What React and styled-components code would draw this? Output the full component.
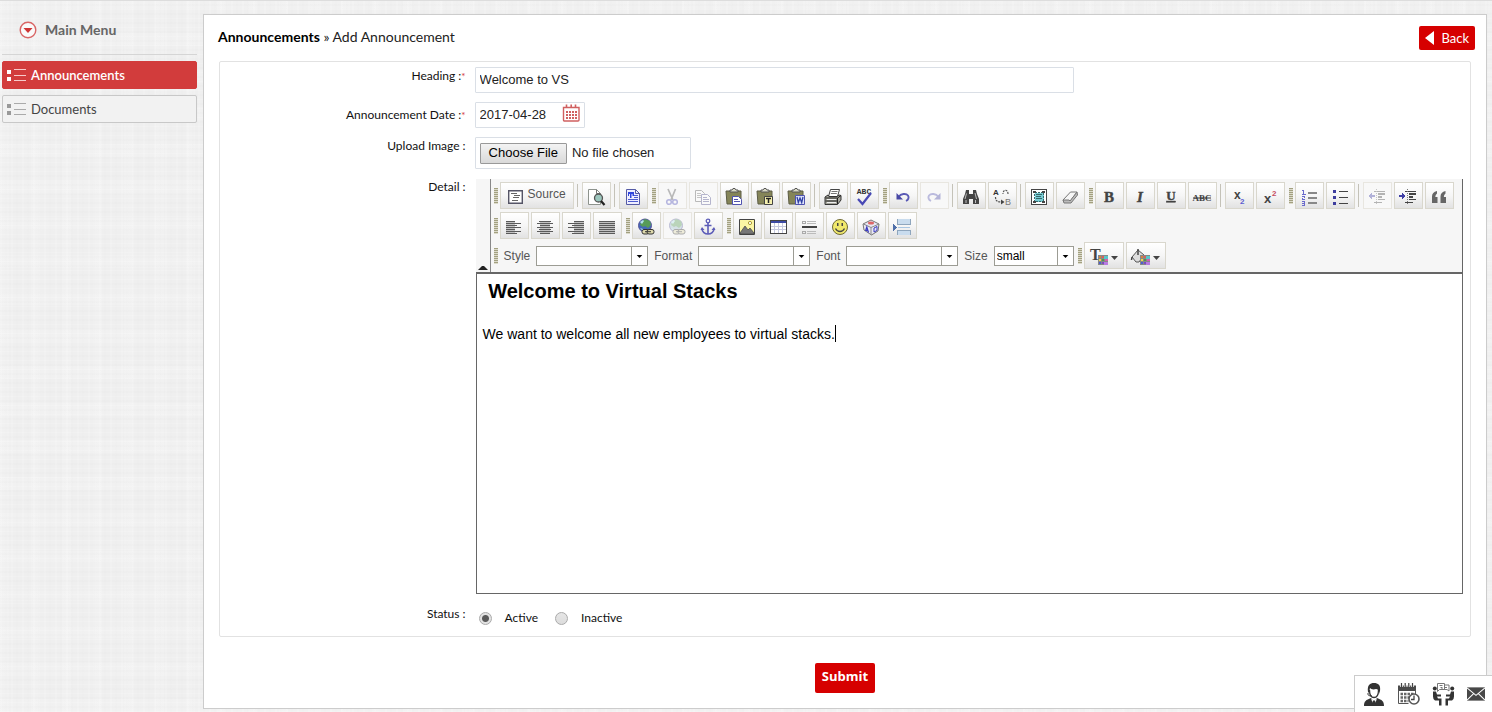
import React from "react";
import styled, { createGlobalStyle, css } from "styled-components";

const sans = '"Liberation Sans", Arial, sans-serif';
const lato = 'Lato, "Open Sans", sans-serif';

const GlobalStyle = createGlobalStyle`
  *, *::before, *::after { box-sizing: border-box; }
  body {
    margin: 0;
    font: 13px/18px ${lato};
    color: #222;
    background-color: #efefef;
    background-image:
      repeating-linear-gradient(90deg, rgba(255,255,255,.14) 0 2px, transparent 2px 5px, rgba(0,0,0,.005) 5px 7px, transparent 7px 11px),
      repeating-linear-gradient(0deg, rgba(255,255,255,.14) 0 1px, transparent 1px 4px, rgba(0,0,0,.006) 4px 6px, transparent 6px 9px),
      repeating-linear-gradient(90deg, rgba(255,255,255,.12) 0 9px, transparent 9px 31px),
      repeating-linear-gradient(0deg, rgba(255,255,255,.12) 0 13px, transparent 13px 37px);
  }
  button, input, select { font: inherit; color: inherit; margin: 0; }
  button { cursor: pointer; }
  svg { display: block; flex: none; }
`;

const Page = styled.div`
  display: flex;
  align-items: flex-start;
  border-top: 1px solid #ddd;
`;

const Sidebar = styled.nav`
  flex: none;
  width: 203px;
  padding: 12px 6px 0 2px;
`;

const MenuHeading = styled.h2`
  display: flex;
  align-items: center;
  gap: 8px;
  height: 42px;
  margin: 0 0 6px;
  padding: 0 0 8px 17px;
  border-bottom: 1px solid #d5d5d5;
  font-size: 14px;
  font-weight: 700;
  color: #666;
`;

const MenuLink = styled.a`
  display: flex;
  align-items: center;
  gap: 4px;
  height: 28px;
  margin-bottom: 6px;
  padding: 0 4px;
  border: 1px solid ${(p) => (p.$active ? "#d23c3c" : "#c8c8c8")};
  border-radius: 2px;
  background: ${(p) => (p.$active ? "#d23c3c" : "#f2f2f2")};
  color: ${(p) => (p.$active ? "#fff" : "#444")};
  font-size: 13px;
  font-weight: ${(p) => (p.$active ? 600 : 400)};
  text-decoration: none;
`;

const Panel = styled.main`
  flex: 1;
  min-width: 0;
  margin: 13px 5px 3px 0;
  padding: 11px 15px 15px;
  border: 1px solid #ccc;
  background: #fff;
`;

const PanelHeader = styled.header`
  display: flex;
  align-items: center;
  justify-content: space-between;
  height: 24px;
  margin: 0 -4px 11px -1px;
`;

const Crumb = styled.h1`
  margin: 0;
  padding-bottom: 2px;
  font-size: 14px;
  font-weight: 400;
  color: #222;
  b { color: #000; }
`;

const RedButton = styled.button`
  display: inline-flex;
  align-items: center;
  justify-content: center;
  gap: 7px;
  height: ${(p) => (p.$large ? 30 : 24)}px;
  padding: ${(p) => (p.$large ? "0 7px 4px" : "0 6px")};
  border: 0;
  border-radius: 2px;
  background: #d60000;
  color: #fff;
  font-family: ${(p) => (p.$large ? '"Open Sans", sans-serif' : lato)};
  font-size: 13px;
  font-weight: ${(p) => (p.$large ? 700 : 400)};
`;

const Fields = styled.div`
  display: grid;
  grid-template-columns: 20% minmax(0, 1fr);
  gap: 9px 6px;
  padding: 5px 7px 5px 0;
  border: 1px solid #e2e2e2;
  border-radius: 2px;
`;

const FieldLabel = styled.label`
  padding-top: ${(p) => p.$top || 0}px;
  padding-right: 3px;
  text-align: right;
  font-size: 12px;
  color: #111;
`;

const Required = styled.span`
  color: #d23c3c;
  font-size: 10px;
`;

const inputFrame = css`
  border: 1px solid #dadfe6;
  border-radius: 1px;
  background: #fff;
`;

const TextInput = styled.input`
  ${inputFrame}
  display: block;
  width: 100%;
  max-width: 599px;
  height: 26px;
  padding: 0 4px 1px;
  font-family: ${sans};
  font-size: 13px;
`;

const DateBox = styled.div`
  ${inputFrame}
  display: flex;
  width: 110px;
  height: 26px;
  padding-right: 4px;
  ${TextInput} { border: 0; height: 24px; flex: 1; min-width: 0; }
`;

const IconButton = styled.button`
  padding: 1px 0 0;
  border: 0;
  background: none;
  align-self: flex-start;
`;

const FileInput = styled.input`
  ${inputFrame}
  display: block;
  width: 216px;
  height: 32px;
  padding: 4px;
  font: 13px/21px ${sans};
  &::file-selector-button {
    height: 21px;
    margin: 0 5px 0 0;
    padding: 0 8px;
    border: 1px solid #999;
    border-radius: 1px;
    background: linear-gradient(#f3f3f3, #d9d9d9);
    font: 13px/18px ${sans};
    color: #000;
  }
`;

const Editor = styled.section`
  margin: 1px 0 0 1px;
  color: #000;
  font-family: ${sans};
`;

const ToolbarFrame = styled.div`
  display: flex;
  border-right: 1px solid #666;
  background: #f6f6f6;
`;

const Collapser = styled.button`
  display: flex;
  align-items: flex-end;
  justify-content: center;
  width: 15px;
  padding: 0 0 2px;
  border: 0;
  border-right: 1px solid #888;
  background: transparent;
`;

const ToolRows = styled.div`
  flex: 1;
  min-width: 0;
  display: flex;
  flex-direction: column;
  gap: 3px;
  padding: 3px 1px;
`;

const ToolRow = styled.div`
  display: flex;
  flex-wrap: wrap;
  align-items: center;
  gap: 2px;
`;

const Tool = styled.button`
  display: flex;
  align-items: center;
  justify-content: center;
  gap: 5px;
  flex: none;
  width: ${(p) => p.$w || 29}px;
  height: 27px;
  padding: 2px 0 0;
  border: 1px solid #d9d7cd;
  background: linear-gradient(#fff, #f6f6f6 50%, #e2e2e2);
  font-size: 12px;
  line-height: 14px;
  color: #555;
  ${(p) => p.$word && "align-items: flex-end; padding: 0 0 4px;"}
  &:disabled {
    border-color: #e8e6e0;
    background: #f8f8f8;
    svg { opacity: 0.38; }
  }
`;

const ToolWord = styled.span`
  padding-bottom: 3px;
`;

const Separator = styled.span`
  width: 1px;
  height: 23px;
  margin: 0 2px 0 1px;
  background: #c4c2b8;
`;

const Grip = styled.span`
  width: 4px;
  height: 16px;
  margin-left: 2px;
  background: repeating-linear-gradient(#a2a080 0 1px, #dcdacb 1px 2px);
`;

const ComboLabel = styled.label`
  display: flex;
  align-items: center;
  gap: 6px;
  padding-left: 4px;
  font-size: 12px;
  color: #555;
`;

const Combo = styled.span`
  display: grid;
  width: ${(p) => p.$w}px;
  height: 20px;
  border: 1px solid #9c9c94;
  background: #fff;
  > * { grid-area: 1 / 1; }
  > svg {
    justify-self: end;
    width: 16px;
    height: 18px;
    border-left: 1px solid #9c9c94;
    pointer-events: none;
  }
`;

const ComboSelect = styled.select`
  appearance: none;
  width: 100%;
  height: 18px;
  padding: 0 18px 0 2px;
  border: 0;
  background: transparent;
  font: 12px/18px ${sans};
  color: #000;
`;

const EditArea = styled.div`
  min-height: 322px;
  padding: 5px 6px;
  border: 1px solid #666;
  border-top: 2px solid #666;
  outline: 0;
  font-size: 14px;
  h2 { margin: 0; font-size: 20px; line-height: 24px; white-space: pre; }
  p { margin: 22px 0 0; line-height: 18px; }
`;

const Caret = styled.i`
  display: inline-block;
  width: 1px;
  height: 17px;
  background: #000;
  vertical-align: text-bottom;
`;

const RadioGroup = styled.div`
  display: flex;
  align-items: center;
  gap: 17px;
  height: 28px;
  padding: 2px 0 0 4px;
`;

const RadioLabel = styled.label`
  display: flex;
  align-items: center;
  gap: 13px;
  font-size: 12px;
  color: #111;
`;

const Radio = styled.input`
  appearance: none;
  width: 13px;
  height: 13px;
  border: 1px solid #aaa;
  border-radius: 50%;
  background: linear-gradient(#e6e6e6, #dcdcdc);
  &:checked { background: radial-gradient(circle, #5a5a5a 0 3px, #e2e2e2 4px); }
`;

const SubmitRow = styled.div`
  display: flex;
  justify-content: center;
  margin-top: 26px;
`;

const Dock = styled.aside`
  position: fixed;
  right: 0;
  bottom: 0;
  display: flex;
  align-items: center;
  gap: 12px;
  height: 37px;
  padding: 0 7px 0 8px;
  border: solid #ccc;
  border-width: 1px 0 0 1px;
  background: #fff;
  ${IconButton} { padding: 0; align-self: center; }
`;

/* ---------- icons ---------- */

const Svg = ({ s = 18, w, h, crisp, children, vb }) => (
  <svg width={w || s} height={h || s} viewBox={vb || "0 0 18 18"} fill="none" aria-hidden="true"
    overflow="visible" shapeRendering={crisp ? "crispEdges" : undefined}>
    {children}
  </svg>
);

const Down = () => (
  <svg viewBox="0 0 16 18" fill="#000" aria-hidden="true"><path d="M5 8h6l-3 3z" /></svg>
);

const ListIcon = ({ active }) => (
  <Svg w={20} h={14} vb="0 0 20 14" crisp>
    <path d="M0 2h4v4H0zM0 9h4v4H0z" fill={active ? "#fff" : "#999"} />
    <path d="M7 1.5h12M7 7.5h12M7 12.5h12" stroke={active ? "#f7caca" : "#aaa"} />
  </Svg>
);

const CalendarIcon = () => (
  <Svg w={18} h={18}>
    <path d="M1.500 3.500h15.500v12.500a1 1 0 0 1-1 1h-13.500a1 1 0 0 1-1-1z" stroke="#d06060" strokeWidth="1.400" />
    <path d="M4.500 0.500v3M9.200 0.500v3M13.500 0.500v3" stroke="#d06060" strokeWidth="1.600" />
    <path d="M4 8h11M4 11h11M4 14h11" stroke="#d06060" strokeWidth="2" strokeDasharray="2 1" />
  </Svg>
);

const Letter = ({ children, ...p }) => (
  <Svg><text x="9" y="14" textAnchor="middle" fontFamily="Liberation Serif, serif" fontSize="15" fontWeight="700" fill="#444" stroke="#444" strokeWidth=".4" {...p}>{children}</text></Svg>
);

const Lines = ({ rows, base }) => (
  <Svg crisp>
    <rect x={base[0]} y="3" width={base[1]} height="13" fill="#c2c2c2" />
    {rows.map(([x, w], i) => <rect key={i} x={x} y={3 + i * 2} width={w} height="1" fill="#5a5a5a" />)}
  </Svg>
);

const Clipboard = ({ children }) => (
  <Svg>
    <path d="M1 3h15v13h-14z" fill="#858558" stroke="#5c5c45" />
    <path d="M5 4V2h2l1-1.500h2L11 2h2v2z" fill="#d9d9c5" stroke="#555" />
    {children}
  </Svg>
);

const Globe = ({ dull }) => (
  <Svg>
    <circle cx="8" cy="7.500" r="6.500" fill={dull ? "#9dbdc9" : "#4468b8"} stroke="#555599" />
    <path d="M4 4l4-3 5 2 1 4-3 3-3-2-2 1-3-2z" fill="#579b58" />
    <path d="M3 4l3-2 1 1-2 3zM3 10l3 1v2z" fill="#b6e3ed" />
    <rect x="5" y="11.500" width="7" height="4.500" rx="2" fill="#ded9ac" stroke="#333" />
    <rect x="10" y="11.500" width="7" height="4.500" rx="2" fill="#ded9ac" stroke="#333" />
    <path d="M8 13.700h6" stroke="#333" />
  </Svg>
);

const Undo = ({ flip }) => (
  <Svg>
    <g transform={flip ? "translate(18 0) scale(-1 1)" : undefined}>
      <path d="M4.500 9C7 5.500 12 5 14 7.500c1.400 2.200.2 4.500-2 5.500" stroke="#5a5ab5" strokeWidth="1.900" />
      <path d="M2.500 5v6.500h6.500z" fill="#4848a5" />
    </g>
  </Svg>
);

const Palette = ({ x = 8, y = 8 }) => (
  <g shapeRendering="crispEdges" transform={`translate(${x} ${y})`}>
    <path d="M0 0h10v10H0z" fill="#888" />
    <path d="M1 1h2v2H1z" fill="#d87f3b" /><path d="M4 1h2v2H4z" fill="#dd5a5a" /><path d="M6 1h4v3H6z" fill="#58c6c9" />
    <path d="M1 4h2v2H1z" fill="#f0db4a" /><path d="M4 4h2v2H4z" fill="#4c9b4c" /><path d="M7 4h3v2H7z" fill="#d65caf" />
    <path d="M1 7h2v2H1z" fill="#4d5ed3" /><path d="M4 7h2v2H4z" fill="#7b4cc0" /><path d="M6 7h4v3H6z" fill="#b87be0" />
  </g>
);

const Indent = ({ out }) => (
  <Svg crisp>
    <path d="M6 3h11v1H6zM10 5h7v2h-7zM10 8h4v2h-4zM10 11h7v1h-7zM6 14h8v1H6z" fill="#444" />
    <path d="M8 1v15" stroke="#777" strokeDasharray="1 1" />
    <path d={out ? "M0 8l4-3v2h3v2H4v2z" : "M7 8L3 5v2H0v2h3v2z"} fill="#3f3fa5" />
  </Svg>
);

const icons = {
  Source: <Svg w={15} h={14} vb="0 0 15 14"><path d="M.7.700h13.600v12.600H.7z" stroke="#556" strokeWidth="1.400" fill="#fff" /><path d="M3 3.500h6M6 5.500h6M5 7.500h6M4 10.500h6" stroke="#666" /></Svg>,
  Preview: <Svg><path d="M1.500 1.500h8l4 4v11h-12z" fill="#fff" stroke="#8d938d" /><path d="M9.500 1.500v4h4" stroke="#777" /><circle cx="11.500" cy="10" r="4" fill="#9cc6bd" stroke="#555" strokeWidth="1.300" /><path d="M14 13l3.500 4" stroke="#222" strokeWidth="2.200" /></Svg>,
  Templates: <Svg><path d="M2.500 1.500h9l4 4v11h-13z" fill="#eef" stroke="#555ba5" /><path d="M11.500 1.500v4h4" stroke="#555ba5" /><path d="M4 4h6v4H8.500V6h-1v4H6V6H5v2H4z" fill="#2f45dc" /><path d="M10 7.500h4M10 9.500h4M4 11.500h10M4 13.500h10" stroke="#4c5bd0" strokeWidth="1.200" /></Svg>,
  Cut: <Svg><path d="M5 1l5 11M12.500 1L8 12" stroke="#555" strokeWidth="1.700" /><circle cx="6" cy="14" r="2.300" stroke="#4a4ab8" strokeWidth="1.500" /><circle cx="12" cy="14" r="2.300" stroke="#4a4ab8" strokeWidth="1.500" /></Svg>,
  Copy: <Svg><path d="M1.500 2.500h6l3 3v8h-9z" fill="#fff" stroke="#555" /><path d="M3 5.500h4M3 7.500h4M3 9.500h4" stroke="#777" /><path d="M7.500 6.500h6l3 3v7h-9z" fill="#fff" stroke="#4a4a88" /><path d="M9 9.500h4M9 11.500h6M9 13.500h6" stroke="#4a4a88" /></Svg>,
  Paste: <Clipboard><path d="M7.500 8.500h6l3 3v5h-9z" fill="#fff" stroke="#5053b0" /><path d="M9 11.500h4M9 13.500h6" stroke="#5053b0" /></Clipboard>,
  "Paste as plain text": <Clipboard><path d="M8.500 8.500h8v8h-8z" fill="#f4f0ae" stroke="#444" /><path d="M10 10.500h5M12.500 10v5" stroke="#222" strokeWidth="1.500" /></Clipboard>,
  "Paste from Word": <Clipboard><path d="M8.500 7.500h9v9h-9z" fill="#dce2fa" stroke="#5053b0" /><path d="M10 9l1.300 5.500L13 10l1.700 4.500L16 9" stroke="#3040a5" strokeWidth="1.300" /></Clipboard>,
  Print: <Svg><path d="M4.500 8.500l2-7h9l-2 7z" fill="#fff" stroke="#444" /><path d="M7.500 3.500h6M6.800 5.500h6" stroke="#777" /><path d="M1 9l3-2 1 1.500h8L15 7l2 .5V12l-3.500 4.500H1z" fill="#a5a59b" stroke="#333" /><path d="M1.500 10h12M1.500 13h12M13.500 10v6M13.500 10L17 7.500" stroke="#222" /><path d="M3 11.500h9M3 14.500h9" stroke="#eee" /></Svg>,
  Spell: <Svg><text x="9" y="6" textAnchor="middle" fontFamily="Liberation Mono, monospace" fontWeight="700" fontSize="8" fill="#333">ABC</text><path d="M3 11l4.500 5L16 5" stroke="#4848b5" strokeWidth="2.200" /></Svg>,
  Undo: <Undo />,
  Redo: <Undo flip />,
  Find: <Svg><path d="M4 2h3v4h4V2h3l1 4 2 5v5h-6v-5H7v5H1v-5l2-5z" fill="#444" /><path d="M4.500 5.500L3 11M13 5l1.500 6M4 12v3M13.500 12v3" stroke="#bbb" /></Svg>,
  Replace: <Svg><text x="0" y="7" fontFamily="Liberation Sans" fontWeight="700" fontSize="8" fill="#333">A</text><text x="12" y="17" fontFamily="Liberation Sans" fontSize="9" fill="#777">B</text><path d="M15 6c0-5-5-5-5 0M2.500 9c0 4 2 5 6 5" stroke="#555" strokeDasharray="2 1" strokeWidth="1.200" /><path d="M8 11.500l3.500 2.500L8 16.500z" fill="#444" /></Svg>,
  "Select all": <Svg crisp><path d="M1.500 1.500h15v15h-15z" fill="#fff" stroke="#444" /><path d="M4.500 4.500h9v9h-9z" fill="#76cbd2" stroke="#37676b" strokeDasharray="2 1" /><path d="M6 6.500h6M6 8.500h5M6 10.500h6" stroke="#37676b" /><path d="M3 3h3v2H3zM12 3h3v2h-3zM3 13h3v2H3zM12 13h3v2h-3z" fill="#444" /></Svg>,
  Eraser: <Svg><path d="M2 12L9.500 4h6.500l-7 9.500H3z" fill="#f6f6f6" stroke="#777" /><path d="M9 13L16 4l.5 3L10 15H3l-1-3h6z" fill="#bbb" stroke="#777" /></Svg>,
  Bold: <Letter>B</Letter>,
  Italic: <Letter fontStyle="italic">I</Letter>,
  Underline: <Letter fontSize="13" y="12" textDecoration="underline">U</Letter>,
  Strike: <Svg w={20} vb="0 0 20 18"><text x="10" y="13" textAnchor="middle" fontFamily="Liberation Serif" fontSize="9" fontWeight="700" fill="#444">ABC</text><path d="M1 10h18" stroke="#333" /></Svg>,
  Subscript: <Svg><text x="4" y="11" fontFamily="Liberation Sans" fontWeight="700" fontSize="12" fill="#444">x</text><text x="10" y="16" fontFamily="Liberation Sans" fontWeight="700" fontSize="8" fill="#5c5cd0">2</text></Svg>,
  Superscript: <Svg><text x="3" y="15" fontFamily="Liberation Sans" fontWeight="700" fontSize="13" fill="#444">x</text><text x="11" y="8" fontFamily="Liberation Sans" fontWeight="700" fontSize="8" fill="#c54c60">2</text></Svg>,
  "Numbered list": <Svg crisp><path d="M8 4.500h9M8 9.500h9M8 14.500h9" stroke="#888" strokeWidth="2" /><path d="M2 2.500h2M3.500 2v5M2 6.500h4M2 8.500h3M4.500 8v2M2 11.500h3M2.500 10v2M2 13.500h3M4.500 13v5M2 15.500h3M2 17.500h3" stroke="#6a6acc" /></Svg>,
  "Bulleted list": <Svg crisp><path d="M2 2h3v3H2zM2 8h3v3H2zM2 14h3v3H2z" fill="#3d3d9e" /><path d="M8 3.500h9M8 9.500h9M8 15.500h9" stroke="#444" /></Svg>,
  Outdent: <Indent out />,
  Indent: <Indent />,
  Quote: <Svg><path d="M2 15V8.500Q2 4 7 3v2.500Q5.300 6.500 5.300 9H7.500v6zM10.500 15V8.500Q10.500 4 15.500 3v2.500Q13.800 6.500 13.800 9H16v6z" fill="#666" /></Svg>,
  "Align left": <Lines base={[1, 9]} rows={[[1, 9], [1, 15], [1, 11], [1, 15], [1, 9], [1, 15], [1, 11]]} />,
  "Align center": <Lines base={[4, 10]} rows={[[3, 12], [1, 16], [4, 10], [1, 16], [3, 12], [1, 16], [4, 10]]} />,
  "Align right": <Lines base={[7, 10]} rows={[[7, 10], [1, 16], [5, 12], [1, 16], [7, 10], [1, 16], [5, 12]]} />,
  Justify: <Lines base={[1, 16]} rows={[[1, 16], [1, 16], [1, 16], [1, 16], [1, 16], [1, 16], [1, 16]]} />,
  Link: <Globe />,
  Unlink: <Globe dull />,
  Anchor: <Svg><circle cx="9" cy="3" r="1.800" stroke="#5c5cb8" strokeWidth="1.300" /><path d="M9 5v11M5.500 7.500h7" stroke="#5c5cb8" strokeWidth="1.600" /><path d="M3 10.500c0 3.500 3 5.500 6 5.500s6-2 6-5.500" stroke="#5c5cb8" strokeWidth="1.600" /><path d="M1.500 12L3 9l2.500 3zM12.500 12L15 9l1.500 3z" fill="#5c5cb8" /></Svg>,
  Image: <Svg><path d="M1.500 1.500h15v15h-15z" fill="#fbf5a4" stroke="#444" /><circle cx="12" cy="5" r="1.600" fill="#fff" stroke="#a99a3a" /><path d="M2 15l5-7 3 4 2-2 4 5v1H2z" fill="#777" stroke="#444" strokeWidth=".7" /></Svg>,
  Table: <Svg crisp><path d="M1 2h17v14H1z" fill="#444" /><path d="M2 3h15v2H2z" fill="#3d4ba5" /><path d="M2 5h15v10H2z" fill="#fff" /><path d="M2 8.500h15M2 11.500h15M5.500 5v10M9.500 5v10M13.500 5v10" stroke="#c6c9df" /></Svg>,
  Rule: <Svg crisp><path d="M7 3.500h9M7 5.500h9M7 13.500h9M7 15.500h9" stroke="#bbb" /><path d="M2 6V3h3v3M2 5h3M2 16v-3h3v3M2 15h3" stroke="#aaa" /><path d="M2 8h15v2H2z" fill="#444" /></Svg>,
  Smiley: <Svg><circle cx="9" cy="9" r="7.500" fill="#f0e86c" stroke="#6f6a35" /><path d="M6 5h1.500v3H6zM10.500 5H12v3h-1.500z" fill="#444" /><path d="M4.500 10.500c2 4 7 4 9 0" stroke="#444" strokeWidth="1.300" /></Svg>,
  "Special character": <Svg><path d="M1 6l8-4 8 4-1 7-6.500 4L2 12z" fill="#e8e8f4" stroke="#777" /><path d="M1.500 6L9 9.500 17 6M9 9.500V17" stroke="#888" /><ellipse cx="9" cy="5" rx="3" ry="1.500" fill="#d66" /><path d="M3.500 13l1.300-4 1.700 5.500M4 12l2 1" stroke="#3b3bc0" strokeWidth="1.200" /><path d="M12 14v-4l3-1.500v4z" stroke="#3b3bc0" /></Svg>,
  "Page break": <Svg crisp><path d="M4 1h13v5H4z" fill="#c9dcee" /><path d="M4.500 1v5.500H17V1" stroke="#8fa6bd" /><path d="M4.500 17v-5H17v5" fill="#c9dcee" stroke="#8fa6bd" /><path d="M5 9.500h12" stroke="#a9c6e2" /><path d="M0 6v7l4-3.500z" fill="#4f6fa9" /></Svg>,
  "Text color": <Svg w={30} vb="0 0 30 18"><text x="1" y="12" fontFamily="Liberation Serif" fontSize="16" fontWeight="700" fill="#444">T</text><Palette x={9} y={7} /><path d="M22 8h7l-3.500 4z" fill="#444" /></Svg>,
  "Background color": <Svg w={30} vb="0 0 30 18"><path d="M1 9l6-7 6 5-5 7H5z" fill="#ddd" stroke="#555" /><path d="M1 9l-.5 3M7 7V1" stroke="#444" strokeWidth="1.500" /><Palette x={9} y={7} /><path d="M22 8h7l-3.500 4z" fill="#444" /></Svg>,
};

const row1 = ["~", "Source", "|", "Preview", "|", "Templates", "~", "Cut", "Copy", "Paste", "Paste as plain text", "Paste from Word", "|", "Print", "Spell", "~", "Undo", "Redo", "|", "Find", "Replace", "|", "Select all", "Eraser", "~", "Bold", "Italic", "Underline", "Strike", "|", "Subscript", "Superscript", "~", "Numbered list", "Bulleted list", "|", "Outdent", "Indent", "Quote"];
const row2 = ["~", "Align left", "Align center", "Align right", "Justify", "~", "Link", "Unlink", "Anchor", "~", "Image", "Table", "Rule", "Smiley", "Special character", "Page break"];
const disabled = ["Cut", "Copy", "Redo", "Unlink", "Outdent"];

const Tools = ({ items }) =>
  items.map((name, i) => {
    if (name === "~") return <Grip key={i} />;
    if (name === "|") return <Separator key={i} />;
    if (name === "Source")
      return <Tool key={i} type="button" $w={74} $word>{icons.Source}<ToolWord>Source</ToolWord></Tool>;
    return (
      <Tool key={i} type="button" aria-label={name} disabled={disabled.includes(name)}>
        {icons[name]}
      </Tool>
    );
  });

const ComboField = ({ label, value = "", w = 112 }) => (
  <ComboLabel>
    {label}
    <Combo $w={w}>
      <ComboSelect defaultValue={value}>
        <option value={value}>{value}</option>
      </ComboSelect>
      <Down />
    </Combo>
  </ComboLabel>
);

const dockIcons = [
  ["Profile", <Svg w={22} h={24} vb="0 0 22 24"><path d="M5 10C4 3 7 1 11 1s7 2 6 8l-1 3c0-3-1-5-3-5-3 1-5 0-6-1l-1 5z" fill="#333" /><path d="M6.500 8c0 5 2 7.500 4.500 7.500S15.500 13 15.500 8" stroke="#333" strokeWidth="1.300" /><path d="M5 11v1.500c0 1 2 1.500 4 1.500" stroke="#333" /><path d="M1 24c0-5 2-6 7-8l3 4 3-4c5 2 7 3 7 8z" fill="#333" /><path d="M8 17l3 6 3-6-3 1.500z" fill="#fff" /><path d="M10 18.500h2l.7 3L11 24l-1.700-2.500z" fill="#333" /></Svg>],
  ["Calendar", <Svg w={23} h={22} vb="0 0 23 22"><path d="M1 2.500h18v5.500H1z" fill="#4a4a4a" /><path d="M4.500 0v4M8.200 0v4M11.800 0v4M15.500 0v4" stroke="#fff" strokeWidth="2.600" /><path d="M4.500 0v4.500M8.200 0v4.500M11.800 0v4.500M15.500 0v4.500" stroke="#444" strokeWidth="1.200" /><path d="M1.500 7v13.500h10M18.500 7v4" stroke="#555" /><path d="M3.500 11h13M3.500 14.500h9M3.500 18h8" stroke="#666" strokeWidth="2.500" strokeDasharray="2.500 1" /><circle cx="17" cy="16" r="5" fill="#fff" stroke="#555" strokeWidth="1.600" /><path d="M17 12.500V16.500h-3" stroke="#444" strokeWidth="1.300" /></Svg>],
  ["Meetings", <Svg w={23} h={24} vb="0 0 23 24"><path d="M5.500 1.500h7v6h-5l-2 2zM12 3h5v6l-2-1.500h-5V6" stroke="#777" fill="#fff" /><path d="M7.500 3.500h3M8.500 5.500h2M13 5.500h2" stroke="#777" /><circle cx="2.800" cy="6.500" r="2" fill="#333" /><circle cx="20.200" cy="6.500" r="2" fill="#333" /><path d="M1 9.500h3l1 3h4v2H5l1 2h3.500v7h-2.500v-5H3q-2-1-2-4zM22 9.500h-3l-1 3h-4v2h4l-1 2h-3.500v7H16v-5h4q2-1 2-4z" fill="#333" /></Svg>],
  ["Mail", <Svg w={18} h={14} vb="0 0 19 14"><path d="M0 0h19v14H0z" fill="#484848" /><path d="M0 .5l9.500 8 9.500-8M0 13.500l7-7M19 13.500l-7-7" stroke="#fff" strokeWidth="1.100" /></Svg>],
];

export default function App() {
  return (
    <>
      <GlobalStyle />
      <Page>
        <Sidebar>
          <MenuHeading>
            <Svg s={18}><circle cx="9" cy="9" r="7.800" stroke="#d96666" strokeWidth="1.400" fill="#fafafa" /><path d="M4.500 7h9L9 12z" fill="#cf3535" /></Svg>
            Main Menu
          </MenuHeading>
          <MenuLink href="#announcements" $active><ListIcon active />Announcements</MenuLink>
          <MenuLink href="#documents"><ListIcon />Documents</MenuLink>
        </Sidebar>

        <Panel as="form" onSubmit={(e) => e.preventDefault()}>
          <PanelHeader>
            <Crumb><b>Announcements</b> » Add Announcement</Crumb>
            <RedButton type="button">
              <Svg w={9} h={14} vb="0 0 9 14"><path d="M9 0v14L0 7z" fill="#fff" /></Svg>
              Back
            </RedButton>
          </PanelHeader>

          <Fields>
            <FieldLabel htmlFor="heading">Heading :<Required>*</Required></FieldLabel>
            <TextInput id="heading" defaultValue="Welcome to VS" />

            <FieldLabel htmlFor="date" $top={4}>Announcement Date :<Required>*</Required></FieldLabel>
            <DateBox>
              <TextInput id="date" defaultValue="2017-04-28" />
              <IconButton type="button" aria-label="Pick a date"><CalendarIcon /></IconButton>
            </DateBox>

            <FieldLabel htmlFor="image">Upload Image :</FieldLabel>
            <FileInput id="image" type="file" />

            <FieldLabel as="span" id="detail">Detail :</FieldLabel>
            <Editor>
              <ToolbarFrame>
                <Collapser type="button" aria-label="Collapse toolbar">
                  <Svg w={10} h={4} vb="0 0 10 4"><path d="M0 4l4-4h2l4 4z" fill="#222" /></Svg>
                </Collapser>
                <ToolRows>
                  <ToolRow><Tools items={row1} /></ToolRow>
                  <ToolRow><Tools items={row2} /></ToolRow>
                  <ToolRow>
                    <Grip />
                    <ComboField label="Style" />
                    <ComboField label="Format" />
                    <ComboField label="Font" />
                    <ComboField label="Size" value="small" w={80} />
                    <Grip />
                    <Tool type="button" $w={40} aria-label="Text color">{icons["Text color"]}</Tool>
                    <Tool type="button" $w={40} aria-label="Background color">{icons["Background color"]}</Tool>
                  </ToolRow>
                </ToolRows>
              </ToolbarFrame>
              <EditArea role="textbox" aria-labelledby="detail" contentEditable suppressContentEditableWarning>
                <h2>{"\u00a0"}Welcome to Virtual Stacks</h2>
                <p>We want to welcome all new employees to virtual stacks.<Caret /></p>
              </EditArea>
            </Editor>

            <FieldLabel as="span" id="status" $top={2}>Status :</FieldLabel>
            <RadioGroup role="radiogroup" aria-labelledby="status">
              <RadioLabel><Radio type="radio" name="status" defaultChecked />Active</RadioLabel>
              <RadioLabel><Radio type="radio" name="status" />Inactive</RadioLabel>
            </RadioGroup>
          </Fields>

          <SubmitRow><RedButton $large type="submit">Submit</RedButton></SubmitRow>
        </Panel>
      </Page>

      <Dock>
        {dockIcons.map(([name, icon]) => (
          <IconButton key={name} type="button" aria-label={name}>{icon}</IconButton>
        ))}
      </Dock>
    </>
  );
}
